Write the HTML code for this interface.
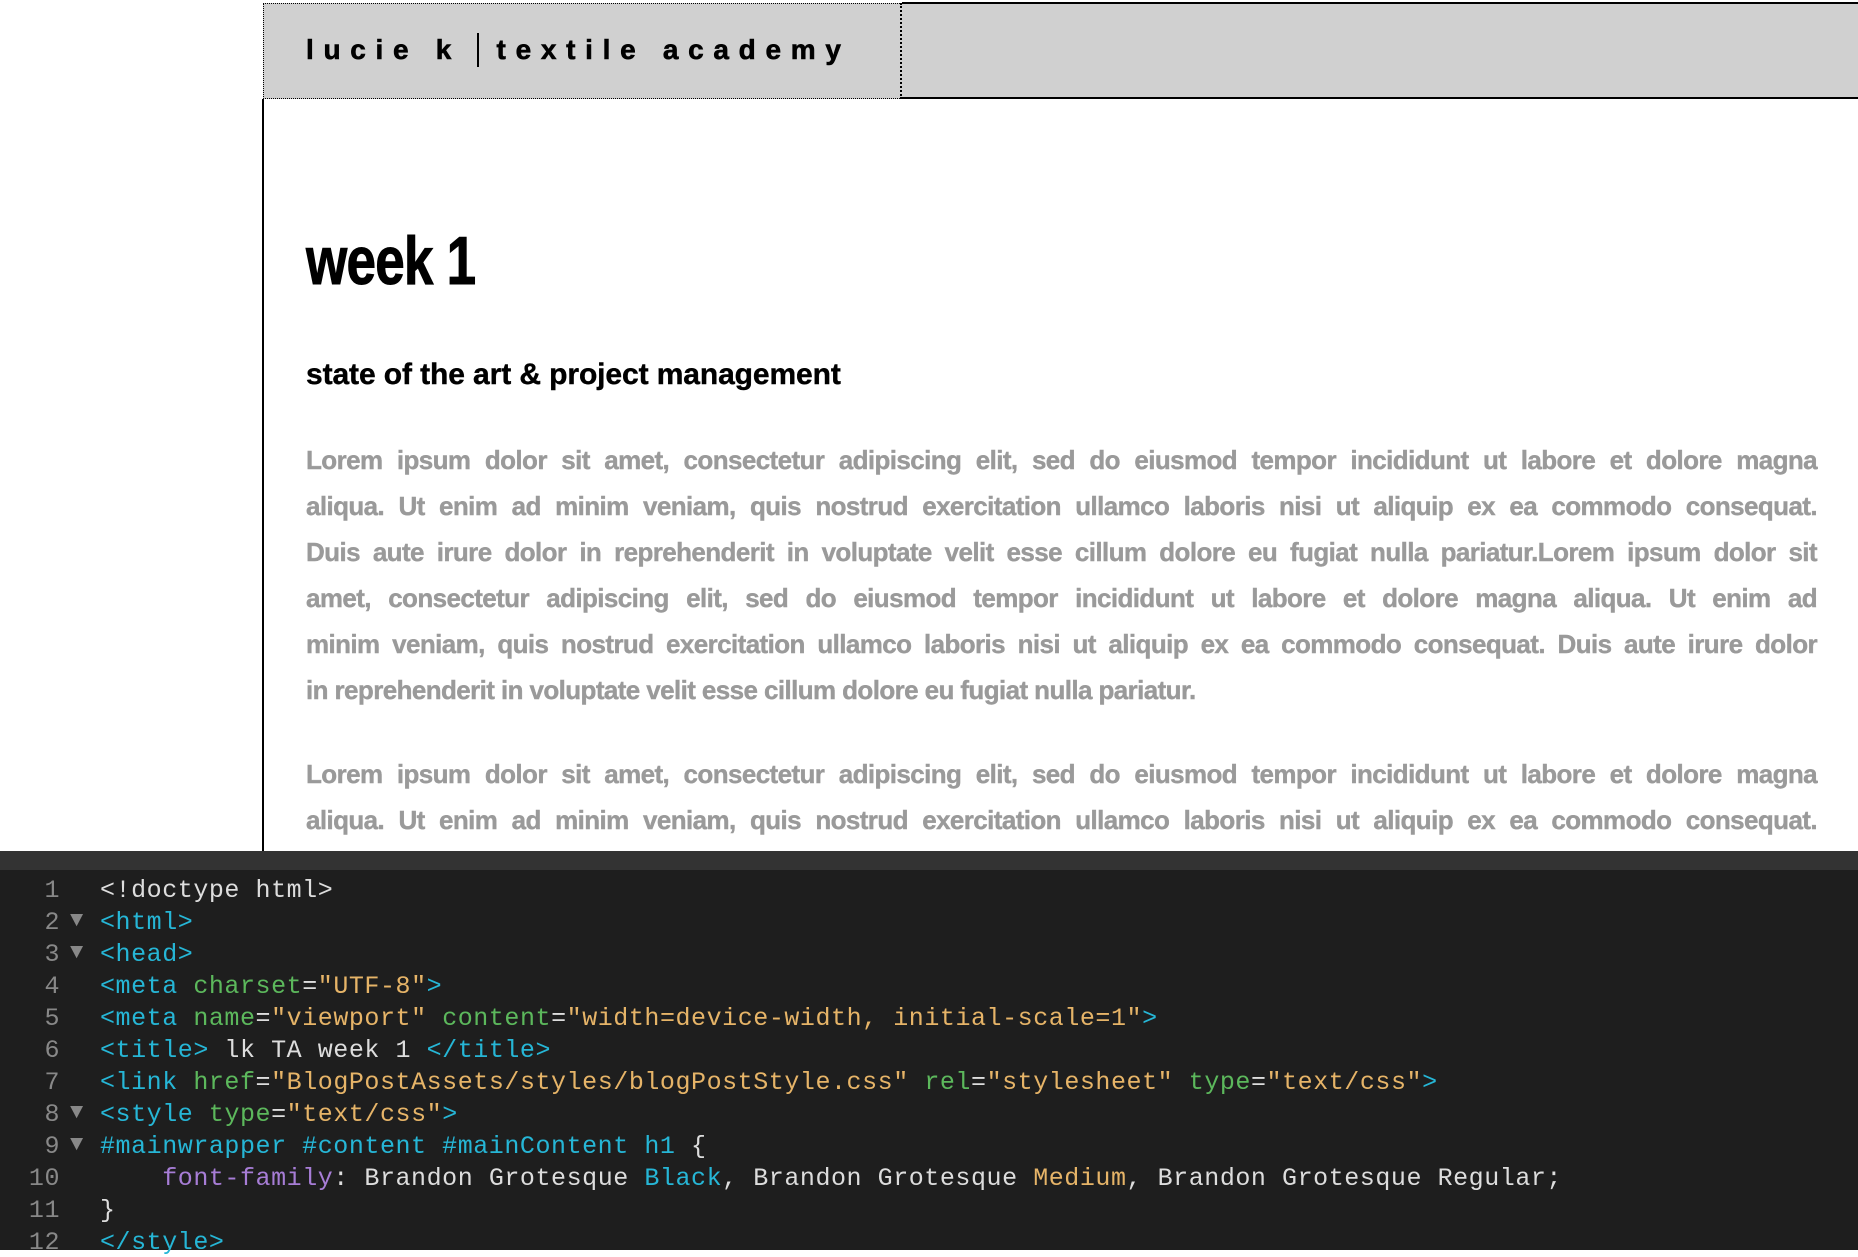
<!DOCTYPE html>
<html><head><meta charset="utf-8"><style>
*{margin:0;padding:0;box-sizing:border-box}
body{width:1858px;height:1250px;overflow:hidden;background:#fff;position:relative;font-family:"Liberation Sans",sans-serif}
.hl{position:absolute;left:263px;top:3px;width:639px;height:96px;background:#d0d0d0;border:1px dotted #000;border-right:2px dotted #000}
.hr{position:absolute;left:902px;top:2px;width:956px;height:97px;background:#d0d0d0;border-top:2px solid #000;border-bottom:2px solid #000}
.logo{position:absolute;left:306px;top:33px;font-size:28px;font-weight:bold;letter-spacing:9.7px;white-space:nowrap;color:#000;-webkit-text-stroke:0.6px #000}
.sep{display:inline-block;width:2px;height:34px;background:#000;vertical-align:-8px;margin-right:18px;margin-left:-2px}
.vline{position:absolute;left:262px;top:99px;width:2px;height:752px;background:#000}
h1{position:absolute;left:306px;top:222px;font-size:68px;font-weight:bold;transform:scaleX(.78);transform-origin:left top;white-space:nowrap;letter-spacing:-1px;-webkit-text-stroke:1px #000}
h2{position:absolute;left:306px;top:358px;font-size:30px;font-weight:bold;white-space:nowrap;letter-spacing:-0.1px;-webkit-text-stroke:0.4px #000}
.p{position:absolute;left:306px;width:1511px;color:#9a9a9a;font-weight:bold;font-size:26px;letter-spacing:-0.6px;-webkit-text-stroke:0.4px #9a9a9a}
.p div{height:46px;line-height:46px;text-align:justify;text-align-last:justify;white-space:nowrap}
.p div.l{text-align-last:left}
.bar{position:absolute;left:0;top:851px;width:1858px;height:19px;background:#333}
.code{position:absolute;left:0;top:872px;width:1858px;height:378px;background:#1e1e1e;font-family:"Liberation Mono",monospace;font-size:25px;letter-spacing:0.55px;color:#ddd}
.bg{position:absolute;left:0;top:870px;width:1858px;height:380px;background:#1e1e1e}
.ln{position:absolute;left:0;width:60px;text-align:right;color:#888}
.tri{position:absolute;left:70px;color:#888;font-size:22px}
.cl{position:absolute;left:100px;white-space:pre}
.t{color:#26b6d6}.a{color:#5cb85c}.s{color:#e6b468}.pu{color:#a77dd6}
</style></head><body>
<div class="hl"></div><div class="hr"></div>
<div class="logo">lucie k <span class="sep"></span>textile academy</div>
<div class="vline"></div>
<h1>week 1</h1>
<h2>state of the art &amp; project management</h2>
<div class="p" style="top:437px">
<div>Lorem ipsum dolor sit amet, consectetur adipiscing elit, sed do eiusmod tempor incididunt ut labore et dolore magna</div>
<div>aliqua. Ut enim ad minim veniam, quis nostrud exercitation ullamco laboris nisi ut aliquip ex ea commodo consequat.</div>
<div>Duis aute irure dolor in reprehenderit in voluptate velit esse cillum dolore eu fugiat nulla pariatur.Lorem ipsum dolor sit</div>
<div>amet, consectetur adipiscing elit, sed do eiusmod tempor incididunt ut labore et dolore magna aliqua. Ut enim ad</div>
<div>minim veniam, quis nostrud exercitation ullamco laboris nisi ut aliquip ex ea commodo consequat. Duis aute irure dolor</div>
<div class="l">in reprehenderit in voluptate velit esse cillum dolore eu fugiat nulla pariatur.</div>
</div>
<div class="p" style="top:751px">
<div>Lorem ipsum dolor sit amet, consectetur adipiscing elit, sed do eiusmod tempor incididunt ut labore et dolore magna</div>
<div>aliqua. Ut enim ad minim veniam, quis nostrud exercitation ullamco laboris nisi ut aliquip ex ea commodo consequat.</div>
</div>
<div class="bar"></div>
<div class="bg"></div>
<div class="code">
<div class="ln" style="top:4px">1</div><div class="cl" style="top:4px">&lt;!doctype html&gt;</div>
<div class="ln" style="top:36px">2</div><div class="tri" style="top:36px">▼</div><div class="cl t" style="top:36px">&lt;html&gt;</div>
<div class="ln" style="top:68px">3</div><div class="tri" style="top:68px">▼</div><div class="cl t" style="top:68px">&lt;head&gt;</div>
<div class="ln" style="top:100px">4</div><div class="cl" style="top:100px"><span class="t">&lt;meta</span> <span class="a">charset</span>=<span class="s">"UTF-8"</span><span class="t">&gt;</span></div>
<div class="ln" style="top:132px">5</div><div class="cl" style="top:132px"><span class="t">&lt;meta</span> <span class="a">name</span>=<span class="s">"viewport"</span> <span class="a">content</span>=<span class="s">"width=device-width, initial-scale=1"</span><span class="t">&gt;</span></div>
<div class="ln" style="top:164px">6</div><div class="cl" style="top:164px"><span class="t">&lt;title&gt;</span> lk TA week 1 <span class="t">&lt;/title&gt;</span></div>
<div class="ln" style="top:196px">7</div><div class="cl" style="top:196px"><span class="t">&lt;link</span> <span class="a">href</span>=<span class="s">"BlogPostAssets/styles/blogPostStyle.css"</span> <span class="a">rel</span>=<span class="s">"stylesheet"</span> <span class="a">type</span>=<span class="s">"text/css"</span><span class="t">&gt;</span></div>
<div class="ln" style="top:228px">8</div><div class="tri" style="top:228px">▼</div><div class="cl" style="top:228px"><span class="t">&lt;style</span> <span class="a">type</span>=<span class="s">"text/css"</span><span class="t">&gt;</span></div>
<div class="ln" style="top:260px">9</div><div class="tri" style="top:260px">▼</div><div class="cl" style="top:260px"><span class="t">#mainwrapper #content #mainContent h1</span> {</div>
<div class="ln" style="top:292px">10</div><div class="cl" style="top:292px">    <span class="pu">font-family</span>: Brandon Grotesque <span class="t">Black</span>, Brandon Grotesque <span class="s">Medium</span>, Brandon Grotesque Regular;</div>
<div class="ln" style="top:324px">11</div><div class="cl" style="top:324px">}</div>
<div class="ln" style="top:356px">12</div><div class="cl t" style="top:356px">&lt;/style&gt;</div>
</div>
</body></html>
